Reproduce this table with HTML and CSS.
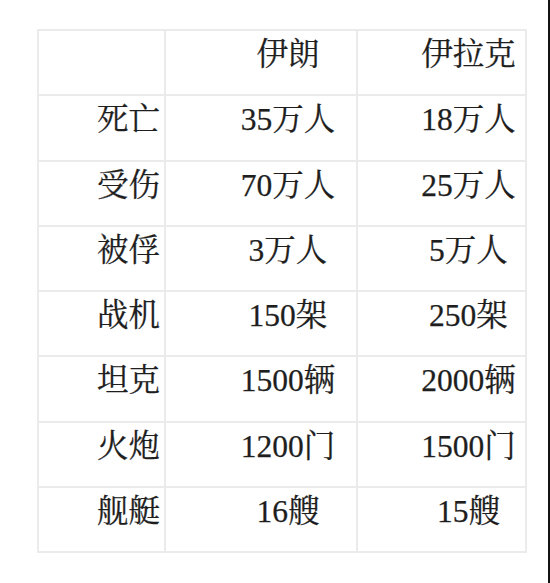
FILE: index.html
```html
<!DOCTYPE html>
<html lang="zh-CN">
<head>
<meta charset="utf-8">
<title>伊朗 伊拉克</title>
<link rel="stylesheet" href="styles.css">
</head>
<body>
<div class="page">
  <table class="stats">
    <colgroup>
      <col class="c1"><col class="c2"><col class="c3">
    </colgroup>
    <tr><td></td><td>伊朗</td><td>伊拉克</td></tr>
    <tr><td>死亡</td><td>35万人</td><td>18万人</td></tr>
    <tr><td>受伤</td><td>70万人</td><td>25万人</td></tr>
    <tr><td>被俘</td><td>3万人</td><td>5万人</td></tr>
    <tr><td>战机</td><td>150架</td><td>250架</td></tr>
    <tr><td>坦克</td><td>1500辆</td><td>2000辆</td></tr>
    <tr><td>火炮</td><td>1200门</td><td>1500门</td></tr>
    <tr><td>舰艇</td><td>16艘</td><td>15艘</td></tr>
  </table>
</div>
</body>
</html>
```
FILE: styles.css
```css
html, body {
  margin: 0;
  padding: 0;
  background: #ffffff;
}
.page {
  box-sizing: border-box;
  width: 550px;
  height: 583px;
  border-right: 2px solid #141414;
  padding: 29px 0 0 37px;
  overflow: hidden;
}
.stats {
  border-collapse: collapse;
  table-layout: fixed;
  width: 488px;
  font-family: "Liberation Serif", "Noto Serif CJK SC", "Noto Sans CJK SC", serif;
  font-size: 31.5px;
  color: #1e1e1e;
  -webkit-text-stroke: 0.25px #1e1e1e;
}
.c1 { width: 127px; }
.c2 { width: 192px; }
.c3 { width: 169px; }
.stats td {
  border: 2px solid #ebebeb;
  padding: 0 0 15.3px 54px;
  line-height: 48px;
  text-align: center;
  white-space: nowrap;
  vertical-align: middle;
}
```
